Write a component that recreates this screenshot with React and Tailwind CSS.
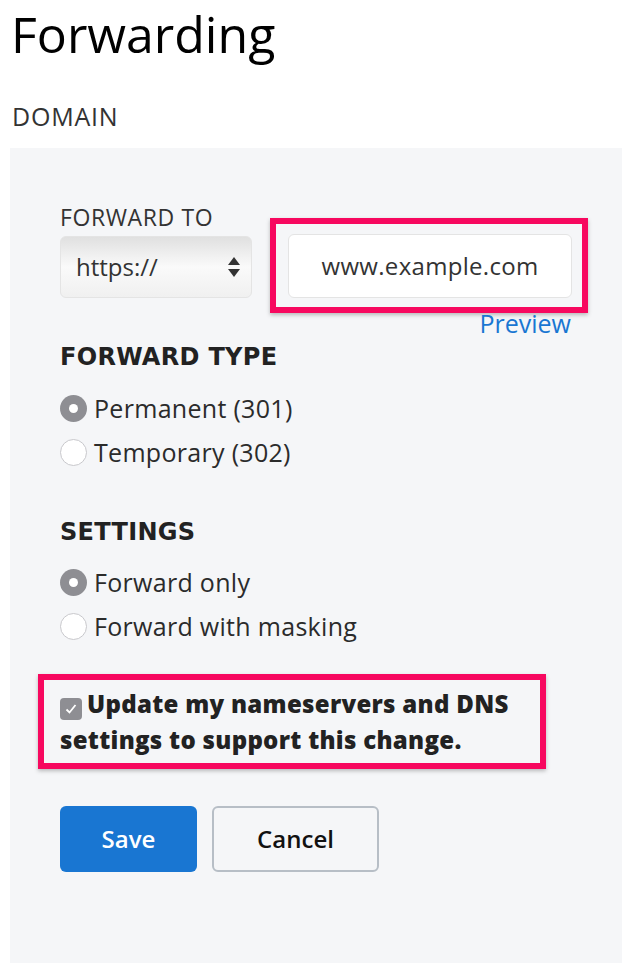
import React, { useState } from "react";

const sans = { fontFamily: '"Open Sans", "Noto Sans", sans-serif' };
const heading = { fontFamily: '"DejaVu Sans", "Open Sans", sans-serif' };

function Radio({ checked, label, onClick }) {
  return (
    <label onClick={onClick} className="flex items-center gap-[7px] cursor-pointer">
      {checked ? (
        <span className="w-[27px] h-[27px] rounded-full bg-[#8e8e93] flex items-center justify-center">
          <span className="w-[9px] h-[9px] rounded-full bg-white" />
        </span>
      ) : (
        <span className="w-[27px] h-[27px] rounded-full bg-white border border-[#c8c8cc]" />
      )}
      <span className="text-[25px] tracking-[0.3px] text-[#2b2b2b] leading-[44px]">{label}</span>
    </label>
  );
}

export default function App() {
  const [type, setType] = useState("301");
  const [mode, setMode] = useState("only");

  return (
    <div className="min-h-[964px] bg-white overflow-hidden" style={sans}>
      <h1 className="pl-[11px] text-[50px] leading-[68px] text-black">Forwarding</h1>
      <div className="pl-[12px] mt-[32px] text-[25px] leading-[32px] text-[#333] tracking-[0.8px]">DOMAIN</div>

      <div className="ml-[10px] mr-[18px] mt-[16px] min-h-[815px] bg-[#f5f6f8] pl-[50px] pr-[20px] pt-[54px]">
        <div className="text-[23px] leading-[30px] text-[#333] tracking-[0.6px]">FORWARD TO</div>
        <div className="flex items-start gap-[18px] mt-[2px]">
          <div className="shrink-0 w-[192px] h-[62px] mt-[2px] rounded-[6px] border border-[#e4e4e4] bg-gradient-to-b from-[#e0e0e0] via-[#fafafa] to-[#f0f0f0] flex items-center justify-between pl-[15px] pr-[10px]">
            <span className="text-[24px] text-[#333]">https://</span>
            <svg width="14" height="24" viewBox="0 0 14 24">
              <path d="M7 2 L13 10 H1 Z" fill="#333" />
              <path d="M7 22 L13 14 H1 Z" fill="#333" />
            </svg>
          </div>
          <div className="shrink-0 flex flex-col items-end">
            <div className="border-[6px] border-[#f7085f] shadow-[0_2px_4px_rgba(0,0,0,0.25)] pt-[10px] pb-[9px] pl-[12px] pr-[10px] -mt-[16px]">
              <div className="w-[284px] h-[64px] bg-white rounded-[6px] border border-[#e4e4e4] flex items-center justify-center text-[24px] tracking-[0.3px] text-[#333]">
                www.example.com
              </div>
            </div>
            <a className="text-[25px] leading-[28px] text-[#1976d2] mr-[17px] -mt-[4px]">Preview</a>
          </div>
        </div>

        <div className="mt-[2px] text-[24px] font-bold tracking-[0.3px] text-[#222] leading-[36px]" style={heading}>FORWARD TYPE</div>
        <div className="mt-[11px] flex flex-col">
          <Radio checked={type === "301"} label="Permanent (301)" onClick={() => setType("301")} />
          <Radio checked={type === "302"} label="Temporary (302)" onClick={() => setType("302")} />
        </div>

        <div className="mt-[40px] text-[24px] font-bold tracking-[0.3px] text-[#222] leading-[36px]" style={heading}>SETTINGS</div>
        <div className="mt-[10px] flex flex-col">
          <Radio checked={mode === "only"} label="Forward only" onClick={() => setMode("only")} />
          <Radio checked={mode === "mask"} label="Forward with masking" onClick={() => setMode("mask")} />
        </div>

        <div className="-ml-[22px] mt-[26px] w-[508px] border-[6px] border-[#f7085f] shadow-[0_2px_4px_rgba(0,0,0,0.25)] pl-[16px] pr-[8px] pt-[6px] pb-[5px]">
          <div className="text-[24px] font-black tracking-[0.3px] text-[#222] leading-[36px]">
            <span className="inline-flex align-[-3px] w-[22px] h-[22px] mr-[5px] rounded-[4px] bg-[#8e8e93] items-center justify-center">
              <svg width="14" height="14" viewBox="0 0 14 14">
                <path d="M2.5 7.5 L5.5 10.5 L11.5 3" stroke="white" strokeWidth="1.8" fill="none" />
              </svg>
            </span>
            Update my nameservers and DNS settings to support this change.
          </div>
        </div>

        <div className="mt-[37px] flex gap-[15px]">
          <button className="w-[137px] h-[66px] rounded-[6px] bg-[#1976d2] text-white text-[24px] font-semibold">Save</button>
          <button className="w-[167px] h-[66px] rounded-[6px] border-2 border-[#b7bec6] bg-[#f5f6f8] text-[#111] text-[24px] font-semibold">Cancel</button>
        </div>
      </div>
    </div>
  );
}
